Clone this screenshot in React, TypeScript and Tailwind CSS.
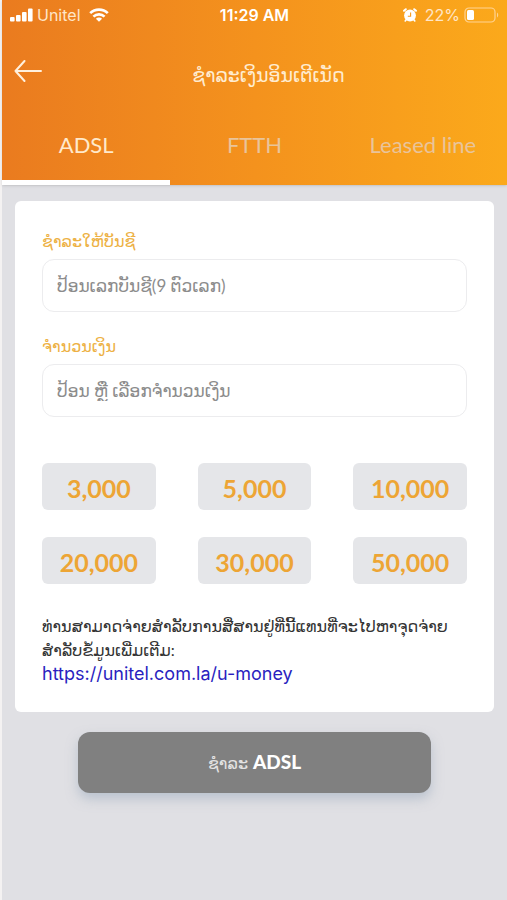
import { useState } from 'react'

const tabs = ['ADSL', 'FTTH', 'Leased line']
const amounts = ['3,000', '5,000', '10,000', '20,000', '30,000', '50,000']

function StatusBar() {
  return (
    <div className="grid grid-cols-3 items-center h-[30px] px-2 font-['Inter',sans-serif] text-base text-white">
      <div className="flex items-center gap-1">
        <svg className="w-[23px] h-[14px]" viewBox="0 0 23 14" fill="currentColor">
          <rect x="0" y="9" width="4.6" height="4.500" rx="1" />
          <rect x="6" y="7" width="4.600" height="6.500" rx="1" />
          <rect x="12" y="4" width="4.600" height="9.500" rx="1" />
          <rect x="18" y="0.500" width="4.600" height="13" rx="1" />
        </svg>
        <span className="text-[#ffe6c8]">Unitel</span>
        <svg className="w-5 h-[14px] ml-1" viewBox="0 0 20 14" fill="none" stroke="currentColor" strokeWidth="2.6">
          <path d="M1.2 5.2C6 .4 14 .4 18.8 5.2" />
          <path d="M4.4 8.600c3.100-3 8.100-3 11.200 0" />
          <path d="M10 13.800 6.900 10.700c1.800-1.700 4.400-1.700 6.200 0z" fill="currentColor" stroke="none" />
        </svg>
      </div>
      <span className="text-center font-semibold whitespace-nowrap">11:29 AM</span>
      <div className="flex items-center justify-end gap-1">
        <svg className="w-[14px] h-[14px] mr-1" viewBox="0 0 14 14">
          <circle cx="7" cy="7.500" r="5.900" fill="#fff" />
          <path d="M1 2.800 2.800 1.200M13 2.800 11.200 1.200" stroke="#fff" strokeWidth="2" strokeLinecap="round" />
          <path d="M3.400 11.500 2.200 13M10.600 11.500l1.200 1.500" stroke="#fff" strokeWidth="1.600" strokeLinecap="round" />
          <path d="M7.600 4.400v3.800H4.800" fill="none" stroke="#f79a1b" strokeWidth="1.100" />
        </svg>
        <span className="text-[#ffe6c8]">22%</span>
        <svg className="w-[35px] h-4" viewBox="0 0 35 16">
          <rect x="1" y="1" width="30" height="14" rx="4" fill="none" stroke="#ffd394" strokeWidth="1.200" />
          <rect x="3" y="3" width="7" height="10" rx="1.500" fill="#fff" />
          <path d="M33 5.500c1.600.8 1.600 4.200 0 5z" fill="#ffd394" />
        </svg>
      </div>
    </div>
  )
}

interface FieldProps {
  id: string
  label: string
  placeholder: string
  value: string
  onChange: (value: string) => void
}

function Field({ id, label, placeholder, value, onChange }: FieldProps) {
  return (
    <div className="flex flex-col gap-1">
      <label htmlFor={id} className="text-base leading-7 text-[#edb144]">
        {label}
      </label>
      <input
        id={id}
        type="text"
        value={value}
        onChange={(e) => onChange(e.target.value)}
        placeholder={placeholder}
        className="w-full h-[53px] px-3.5 rounded-xl border border-[#ececee] bg-white text-[17px] text-gray-700 placeholder:text-[#8c8c8c] outline-none"
      />
    </div>
  )
}

export default function App() {
  const [activeTab, setActiveTab] = useState('ADSL')
  const [account, setAccount] = useState('')
  const [amount, setAmount] = useState('')

  return (
    <div className="min-h-screen border-l-2 border-[#f4f2f2] bg-[#e0e0e4] font-['Lato','DejaVu_Sans',sans-serif]">
      <header className="bg-linear-to-r from-[#ea7b1f] via-[#f4921d] to-[#fba91b] shadow-sm">
        <StatusBar />

        {/* Title row */}
        <div className="grid grid-cols-[28px_1fr] items-center h-[82px] px-3">
          <button aria-label="Back" className="text-[#fff0dd]">
            <svg className="w-7 h-[22px]" viewBox="0 0 28 22" fill="none" stroke="currentColor" strokeWidth="2" strokeLinecap="round" strokeLinejoin="round">
              <path d="M27 11H1.500M10.500 1 1.500 11 10.500 21" />
            </svg>
          </button>
          <h1 className="pt-2 text-center text-[19px] text-[#ffecd0]">ຊຳລະເງິນອິນເຕີເນັດ</h1>
        </div>

        {/* Tabs */}
        <div role="tablist" className="grid grid-cols-3 h-[73px]">
          {tabs.map((tab) => (
            <button
              key={tab}
              role="tab"
              aria-selected={tab === activeTab}
              onClick={() => setActiveTab(tab)}
              className={`pb-1 border-b-5 text-[22px] ${
                tab === activeTab ? 'border-white text-[#ffe9cb]' : 'border-transparent text-[#e9c49b]'
              }`}
            >
              {tab}
            </button>
          ))}
        </div>
      </header>

      <main className="px-[13px] pt-4">
        <section className="rounded-md bg-white px-[27px] py-[26px]">
          <div className="flex flex-col gap-5">
            <Field
              id="account"
              label="ຊຳລະໃຫ້ບັນຊີ"
              placeholder="ປ້ອນເລກບັນຊີ(9 ຕົວເລກ)"
              value={account}
              onChange={setAccount}
            />
            <Field
              id="amount"
              label="ຈຳນວນເງິນ"
              placeholder="ປ້ອນ ຫຼື ເລືອກຈຳນວນເງິນ"
              value={amount}
              onChange={setAmount}
            />
          </div>

          {/* Preset amounts */}
          <div className="grid grid-cols-3 gap-x-[42px] gap-y-[27px] mt-[46px]">
            {amounts.map((preset) => (
              <button
                key={preset}
                onClick={() => setAmount(preset)}
                className="h-[47px] pt-1 rounded-md bg-[#e5e6e9] text-[25px] font-bold text-[#eda535]"
              >
                {preset}
              </button>
            ))}
          </div>

          <div className="mt-[30px] text-base leading-6 text-[#333]">
            <p>ທ່ານສາມາດຈ່າຍສຳລັບການສື່ສານຢູ່ທີ່ນີ້ແທນທີ່ຈະໄປຫາຈຸດຈ່າຍ</p>
            <p>ສຳລັບຂໍ້ມູນເພີ່ມເຕີມ:</p>
            <a href="https://unitel.com.la/u-money" className="font-['Inter',sans-serif] text-lg leading-6 text-[#2a1fc0]">
              https://unitel.com.la/u-money
            </a>
          </div>
        </section>

        <div className="px-[63px] pt-5">
          <button className="w-full h-[61px] rounded-xl bg-[#808080] text-[19px] text-white shadow-[0_6px_12px_rgba(150,165,185,0.5)]">
            <span className="text-base text-[#e4e4e4]">ຊຳລະ</span> <span className="font-black">ADSL</span>
          </button>
        </div>
      </main>
    </div>
  )
}
